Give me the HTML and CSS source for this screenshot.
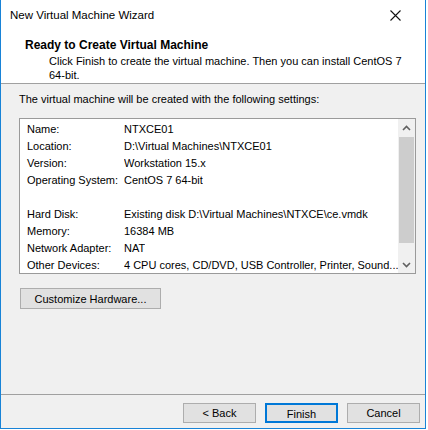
FILE: index.html
```html
<!DOCTYPE html>
<html>
<head>
<meta charset="utf-8">
<link rel="stylesheet" href="styles.css">
</head>
<body>
<div class="window">
  <div class="titlebar">
    <span class="title">New Virtual Machine Wizard</span>
    <span class="close">
      <svg width="11" height="11" viewBox="0 0 11 11"><path d="M0.5 0.5 L10.5 10.5 M10.5 0.5 L0.5 10.5" stroke="#111" stroke-width="1.1" fill="none"/></svg>
    </span>
  </div>
  <div class="header">
    <div class="h-title">Ready to Create Virtual Machine</div>
    <div class="h-desc">Click Finish to create the virtual machine. Then you can install CentOS 7 64-bit.</div>
  </div>
  <div class="content">
    <div class="intro">The virtual machine will be created with the following settings:</div>
    <div class="listbox">
      <div class="rows">
        <div class="row"><span class="lbl">Name:</span><span class="val">NTXCE01</span></div>
        <div class="row"><span class="lbl">Location:</span><span class="val">D:\Virtual Machines\NTXCE01</span></div>
        <div class="row"><span class="lbl">Version:</span><span class="val">Workstation 15.x</span></div>
        <div class="row"><span class="lbl">Operating System:</span><span class="val">CentOS 7 64-bit</span></div>
        <div class="row"><span class="lbl"></span><span class="val"></span></div>
        <div class="row"><span class="lbl">Hard Disk:</span><span class="val">Existing disk D:\Virtual Machines\NTXCE\ce.vmdk</span></div>
        <div class="row"><span class="lbl">Memory:</span><span class="val">16384 MB</span></div>
        <div class="row"><span class="lbl">Network Adapter:</span><span class="val">NAT</span></div>
        <div class="row"><span class="lbl">Other Devices:</span><span class="val">4 CPU cores, CD/DVD, USB Controller, Printer, Sound...</span></div>
      </div>
      <div class="scrollbar">
        <div class="arrow">
          <svg width="9" height="6" viewBox="0 0 9 6"><path d="M1 5 L4.5 1.5 L8 5" stroke="#606060" stroke-width="1.6" fill="none"/></svg>
        </div>
        <div class="track"><div class="thumb"></div></div>
        <div class="arrow">
          <svg width="9" height="6" viewBox="0 0 9 6"><path d="M1 1 L4.5 4.5 L8 1" stroke="#606060" stroke-width="1.6" fill="none"/></svg>
        </div>
      </div>
    </div>
    <button class="btn customize">Customize Hardware...</button>
  </div>
  <div class="footer">
    <button class="btn">&lt; Back</button>
    <button class="btn default">Finish</button>
    <button class="btn">Cancel</button>
  </div>
</div>
</body>
</html>
```

FILE: styles.css
```css
* { box-sizing: border-box; }
html, body { margin: 0; padding: 0; background: #ffffff; }
body {
  font-family: "Liberation Sans", Arial, sans-serif;
  font-size: 11px;
  color: #000;
}
.window {
  width: 426px;
  height: 429px;
  border-left: 1px solid #1883d7;
  border-right: 1px solid #1883d7;
  border-bottom: 1px solid #1883d7;
  display: flex;
  flex-direction: column;
  background: #f0f0f0;
}
.titlebar {
  height: 30px;
  background: #fff;
  display: flex;
  align-items: center;
  justify-content: space-between;
  padding-left: 9px;
}
.title { font-size: 11.5px; line-height: 30px; }
.close {
  width: 46px;
  height: 30px;
  display: flex;
  align-items: center;
  justify-content: center;
  margin-right: 7px;
}
.close svg { display: block; }
.header {
  height: 54px;
  background: #fff;
  border-bottom: 1px solid #a0a0a0;
  padding: 7px 10px 0 24px;
}
.h-title {
  font-weight: bold;
  font-size: 12px;
  line-height: 16px;
}
.h-desc {
  margin-top: 1px;
  padding-left: 24px;
  width: 380px;
  line-height: 14px;
}
.content {
  flex: 1;
  padding: 8px 0 0 18px;
}
.intro { line-height: 14px; }
.listbox {
  margin-top: 12px;
  width: 397px;
  height: 156px;
  border: 1px solid #9a9a9a;
  background: #fff;
  display: flex;
  overflow: hidden;
}
.rows {
  flex: 1;
  padding: 2px 0 0 7px;
  overflow: hidden;
}
.row {
  display: flex;
  height: 17px;
  line-height: 17px;
  white-space: nowrap;
}
.lbl { width: 97px; flex: none; }
.val { overflow: hidden; }
.scrollbar {
  width: 17px;
  flex: none;
  background: #f0f0f0;
  display: flex;
  flex-direction: column;
}
.arrow {
  height: 17px;
  display: flex;
  align-items: center;
  justify-content: center;
}
.arrow svg { display: block; }
.track {
  flex: 1;
  padding: 1px 1px 0 1px;
}
.thumb {
  height: 106px;
  background: #cdcdcd;
}
.btn {
  font-family: "Liberation Sans", Arial, sans-serif;
  font-size: 11px;
  color: #000;
  background: #e1e1e1;
  border: 1px solid #adadad;
  height: 20px;
  width: 73px;
  padding: 0;
  margin: 0;
  line-height: 18px;
}
.customize {
  margin-top: 14px;
  margin-left: 1px;
  width: 141px;
  height: 21px;
}
.footer {
  height: 34px;
  border-top: 1px solid #a0a0a0;
  padding: 8px 5px 0 0;
  display: flex;
  justify-content: flex-end;
  gap: 9px;
}
.btn.default {
  border: 2px solid #0078d7;
}
```
